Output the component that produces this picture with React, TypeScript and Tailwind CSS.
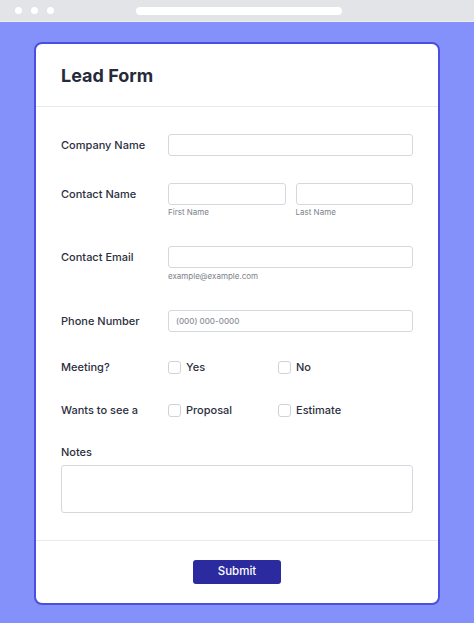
import React from "react";

const font = { fontFamily: "Inter, 'Noto Sans', sans-serif" };

function Checkbox({ label }: { label: string }) {
  return (
    <div className="flex w-[110px] items-center gap-[5px]">
      <span className="h-[13px] w-[13px] rounded-[3px] border border-[#cfd2d9] bg-white" />
      <span className="text-[11px] text-[#2c3040]">{label}</span>
    </div>
  );
}

function Input({ placeholder }: { placeholder?: string }) {
  return (
    <div className="flex h-[22px] w-full items-center rounded-[3px] border border-[#d5d8de] bg-white px-[7px] text-[8px] text-[#8a8f99]">
      {placeholder}
    </div>
  );
}

export default function App() {
  return (
    <div className="min-h-[623px] w-[474px] bg-[#8491fa]" style={font}>
      <div className="relative flex h-[22px] items-center border-b border-[#eceef0] bg-[#e2e4e7]">
        <div className="ml-[15px] flex gap-[9px]">
          <span className="h-[7px] w-[7px] rounded-full bg-white" />
          <span className="h-[7px] w-[7px] rounded-full bg-white" />
          <span className="h-[7px] w-[7px] rounded-full bg-white" />
        </div>
        <div className="ml-[82px] h-[8px] w-[206px] rounded-full bg-white" />
      </div>

      <div className="mx-[34px] mt-[20px] rounded-[8px] border-2 border-[#4a4fe0] bg-white">
        <div className="flex h-[63px] items-center border-b border-[#e9eaee] px-[25px]">
          <h1 className="text-[18px] font-bold text-[#262a3a]">Lead Form</h1>
        </div>

        <div className="px-[25px] pb-[27px] pt-[27px] font-medium text-[#2c3040]">
          <div className="flex items-center">
            <div className="w-[107px] shrink-0 text-[11px]">Company Name</div>
            <Input />
          </div>

          <div className="mt-[27px] flex items-start">
            <div className="flex h-[22px] w-[107px] shrink-0 items-center text-[11px]">Contact Name</div>
            <div className="flex flex-1 gap-[10px]">
              <div className="flex-1">
                <Input />
                <div className="mt-[2px] text-[8px] font-normal leading-[10px] text-[#7d828c]">First Name</div>
              </div>
              <div className="flex-1">
                <Input />
                <div className="mt-[2px] text-[8px] font-normal leading-[10px] text-[#7d828c]">Last Name</div>
              </div>
            </div>
          </div>

          <div className="mt-[29px] flex items-start">
            <div className="flex h-[22px] w-[107px] shrink-0 items-center text-[11px]">Contact Email</div>
            <div className="flex-1">
              <Input />
              <div className="mt-[3px] text-[8px] font-normal leading-[10px] text-[#7d828c]">example@example.com</div>
            </div>
          </div>

          <div className="mt-[29px] flex items-center">
            <div className="w-[107px] shrink-0 text-[11px]">Phone Number</div>
            <Input placeholder="(000) 000-0000" />
          </div>

          <div className="mt-[25px] flex h-[20px] items-center">
            <div className="w-[107px] shrink-0 text-[11px]">Meeting?</div>
            <Checkbox label="Yes" />
            <Checkbox label="No" />
          </div>

          <div className="mt-[23px] flex h-[20px] items-center">
            <div className="w-[107px] shrink-0 text-[11px]">Wants to see a</div>
            <Checkbox label="Proposal" />
            <Checkbox label="Estimate" />
          </div>

          <div className="mt-[25px] text-[11px] leading-[14px]">Notes</div>
          <div className="mt-[6px] h-[48px] rounded-[3px] border border-[#d5d8de] bg-white" />
        </div>

        <div className="flex justify-center border-t border-[#e9eaee] py-[19px]">
          <button className="h-[24px] w-[88px] rounded-[3px] bg-[#2b2a9f] text-[11.5px] font-medium text-white">
            Submit
          </button>
        </div>
      </div>
    </div>
  );
}
